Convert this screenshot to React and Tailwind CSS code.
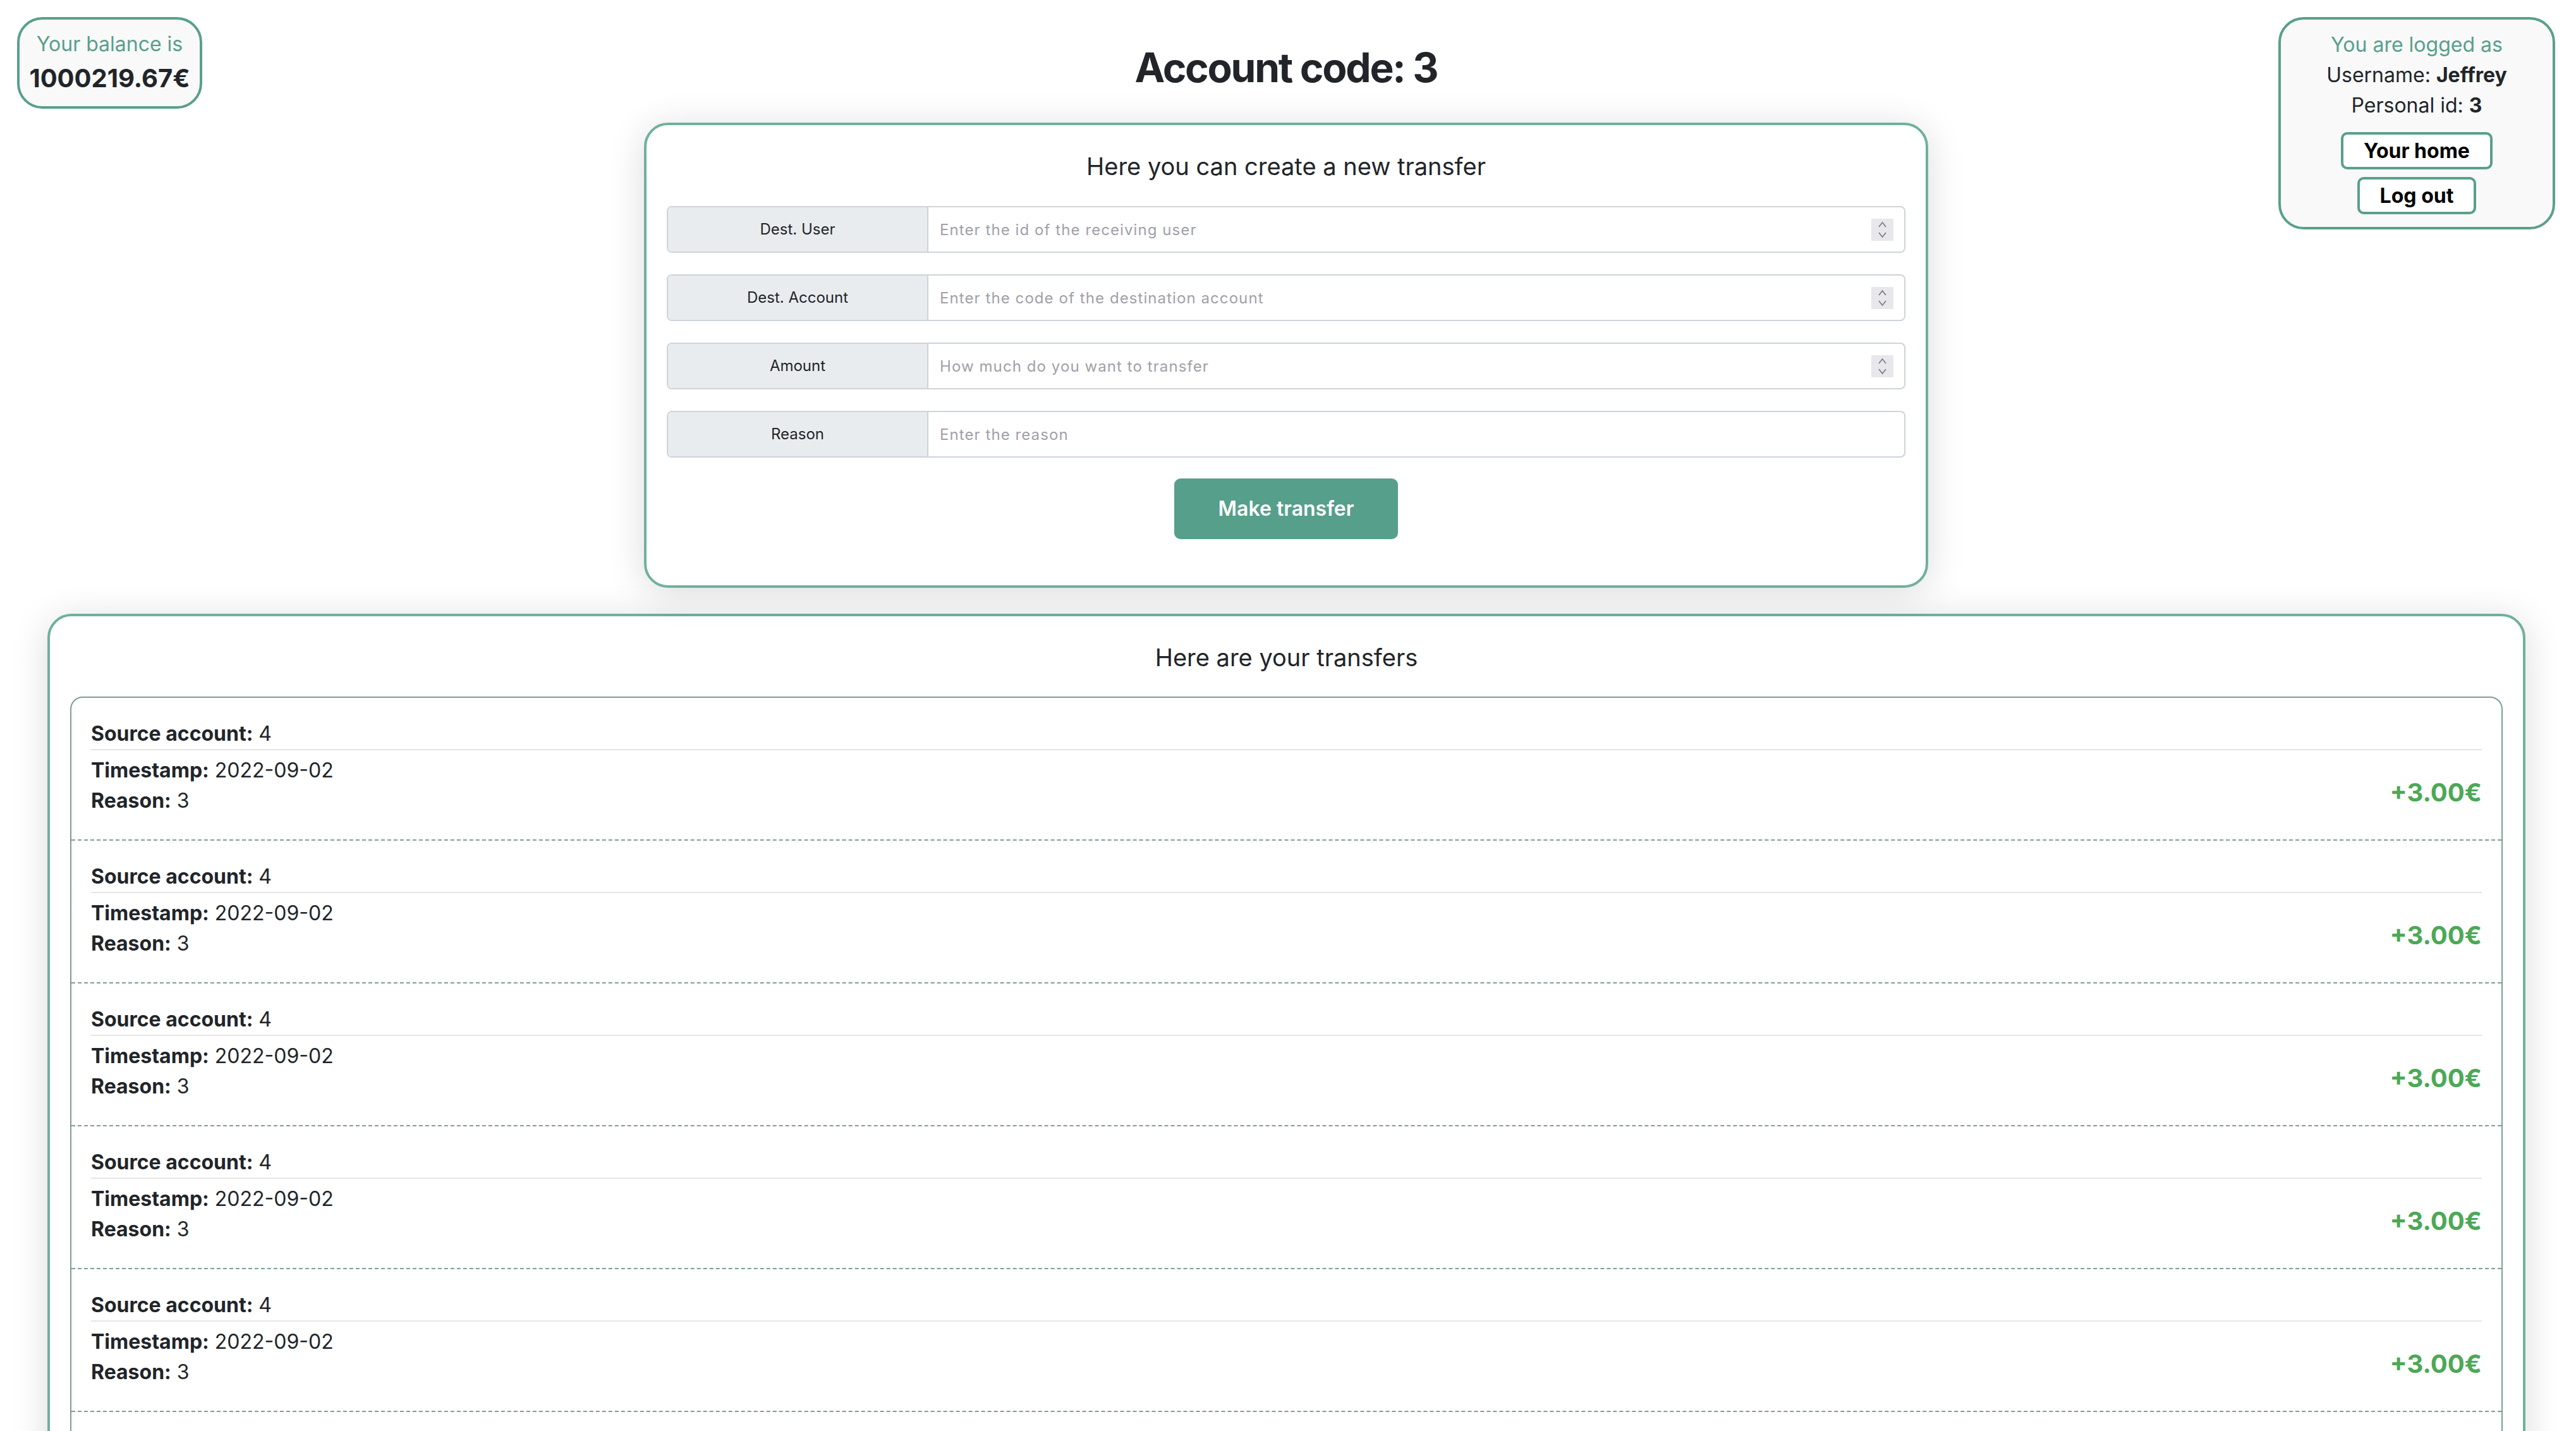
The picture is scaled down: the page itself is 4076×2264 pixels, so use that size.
import React from 'react';

const fields = [
  { label: 'Dest. User', placeholder: 'Enter the id of the receiving user', spin: true },
  { label: 'Dest. Account', placeholder: 'Enter the code of the destination account', spin: true },
  { label: 'Amount', placeholder: 'How much do you want to transfer', spin: true },
  { label: 'Reason', placeholder: 'Enter the reason', spin: false },
];

const transfers = Array.from({ length: 6 }, (_, i) => ({
  id: i,
  source: 4,
  timestamp: '2022-09-02',
  reason: 3,
  amount: '+3.00€',
}));

function Spinner() {
  return (
    <svg width="35" height="35" viewBox="0 0 35 35" className="shrink-0">
      <rect width="35" height="35" fill="#e8e8ec" />
      <path d="M12 13 L17.5 6 L23 13" stroke="#85858f" strokeWidth="2" fill="none" />
      <path d="M12 22 L17.5 29 L23 22" stroke="#85858f" strokeWidth="2" fill="none" />
    </svg>
  );
}

function FieldRow({ label, placeholder, spin }) {
  return (
    <div className="flex h-[74px] w-full items-center overflow-hidden rounded-[8px] border-2 border-[#ced4da] bg-white">
      <div className="flex h-full w-[412px] shrink-0 items-center justify-center border-r-2 border-[#ced4da] bg-[#e9ecef] text-[24px] text-[#212529]">
        {label}
      </div>
      <input
        type="text"
        placeholder={placeholder}
        className="h-full flex-1 bg-transparent pl-[18px] text-[24px] tracking-[0.045em] outline-none placeholder:text-[#a0a0a8]"
      />
      {spin && <div className="mr-[17px]"><Spinner /></div>}
    </div>
  );
}

function TransferItem({ t, first }) {
  return (
    <div className={first ? 'px-[31px] pt-[33px] pb-[37px]' : 'border-t-2 border-dashed border-[#7d9f96] px-[31px] pt-[33px] pb-[37px]'}>
      <div className="border-b-2 border-[#e5e5e5] leading-[48px]">
        <span className="font-bold">Source account:</span> {t.source}
      </div>
      <div className="mt-[8px] flex items-center justify-between">
        <div className="leading-[48px]">
          <div><span className="font-bold">Timestamp:</span> {t.timestamp}</div>
          <div><span className="font-bold">Reason:</span> {t.reason}</div>
        </div>
        <div className="pt-[22px] text-[40px] font-bold text-[#4ca856]">{t.amount}</div>
      </div>
    </div>
  );
}

export default function App() {
  return (
    <div className="min-h-screen bg-white font-['Inter','Noto_Sans',sans-serif] text-[32px] leading-[48px] text-[#212529]">
      <div className="grid grid-cols-[1fr_auto_1fr] items-start pl-[27px] pr-[33px] pt-[27px]">
        {/* Balance */}
        <div className="w-[293px] justify-self-start rounded-[40px] border-4 border-[#58a08b] bg-[#f9f9f9] px-[14px] pt-[15px] pb-[20px] text-center">
          <div className="text-[#58a08b]">Your balance is</div>
          <div className="mt-[6px] text-[40px] font-bold">1000219.67€</div>
        </div>

        {/* Center */}
        <div className="flex flex-col items-center">
          <h1 className="mt-[41px] mb-[49px] text-center text-[64px] font-bold leading-[77px] tracking-[-0.035em]">Account code: 3</h1>
          <div className="w-[2032px] rounded-[38px] border-4 border-[#6fb09e] bg-white px-[32px] pt-[42px] pb-[73px] shadow-[0_8px_60px_rgba(0,0,0,0.14)]">
            <div className="text-center text-[38px] leading-[46px]">Here you can create a new transfer</div>
            <div className="mt-[40px] flex flex-col gap-[34px]">
              {fields.map(f => <FieldRow key={f.label} {...f} />)}
            </div>
            <div className="mt-[33px] flex justify-center">
              <button className="h-[96px] w-[354px] rounded-[10px] bg-[#569f8a] text-[32px] font-semibold text-white">
                Make transfer
              </button>
            </div>
          </div>
        </div>

        {/* User */}
        <div className="flex w-[438px] flex-col items-center justify-self-end rounded-[40px] border-4 border-[#58a08b] bg-[#f9f9f9] pt-[16px] pb-[20px] text-center">
          <div className="text-[#58a08b]">You are logged as</div>
          <div>Username: <span className="font-bold">Jeffrey</span></div>
          <div>Personal id: <span className="font-bold">3</span></div>
          <button className="mt-[18px] h-[59px] rounded-[10px] border-4 border-[#58a08b] bg-white px-[32px] font-bold text-black">Your home</button>
          <button className="mt-[12px] h-[59px] rounded-[10px] border-4 border-[#58a08b] bg-white px-[32px] font-bold text-black">Log out</button>
        </div>
      </div>

      {/* Transfers */}
      <div className="ml-[75px] mt-[41px] w-[3921px] rounded-[38px] border-4 border-[#6fb09e] bg-white px-[32px] pt-[42px] pb-[40px] shadow-[0_8px_60px_rgba(0,0,0,0.14)]">
        <div className="text-center text-[38px] leading-[46px]">Here are your transfers</div>
        <div className="mt-[39px] rounded-[20px] border-2 border-[#7d9f96]">
          {transfers.map((t, i) => <TransferItem key={t.id} t={t} first={i === 0} />)}
        </div>
      </div>
    </div>
  );
}
